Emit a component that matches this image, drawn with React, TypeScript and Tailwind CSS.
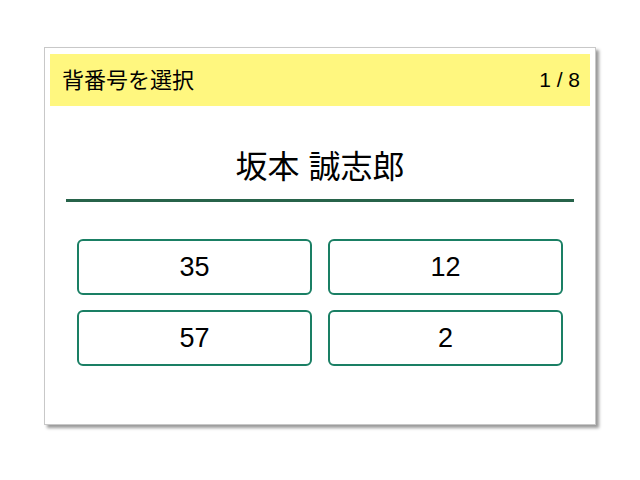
export default function App() {
  const nums = ["35", "12", "57", "2"];
  return (
    <div
      className="w-[640px] h-[480px] bg-white pt-[47px] pl-[44px]"
      style={{ fontFamily: '"Liberation Sans", "Noto Sans CJK JP", sans-serif' }}
    >
      <div className="w-[552px] h-[378px] border border-[#c8c8c8] bg-white px-[5px] pt-[6px] shadow-[3px_3px_3px_rgba(0,0,0,0.4)]">
        <div className="h-[52px] bg-[#fff77f] flex items-center justify-between pl-[12px] pr-[10px] text-black">
          <span className="text-[22px]">背番号を選択</span>
          <span className="text-[21px]">1 / 8</span>
        </div>
        <div className="mx-[16px] mt-[41px] pb-[12px] border-b-[3px] border-[#27634a] text-center text-[32px] leading-[40px] text-black">
          坂本 誠志郎
        </div>
        <div className="mx-[27px] mt-[37px] grid grid-cols-2 gap-x-[16px] gap-y-[15px]">
          {nums.map((n) => (
            <button
              key={n}
              className="h-[56px] border-2 border-[#1a7f64] rounded-[6px] bg-white text-[27px] text-black flex items-center justify-center"
            >
              {n}
            </button>
          ))}
        </div>
      </div>
    </div>
  );
}
